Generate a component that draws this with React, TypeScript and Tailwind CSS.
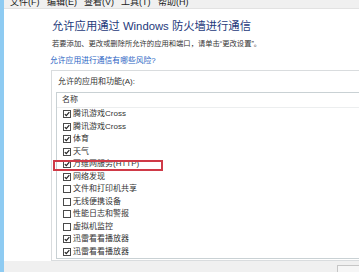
import React from "react";

const menus = ["文件(F)", "编辑(E)", "查看(V)", "工具(T)", "帮助(H)"];

const apps = [
  { name: "腾讯游戏Cross", checked: true },
  { name: "腾讯游戏Cross", checked: true },
  { name: "体育", checked: true },
  { name: "天气", checked: true },
  { name: "万维网服务(HTTP)", checked: true, marked: true },
  { name: "网络发现", checked: true },
  { name: "文件和打印机共享", checked: false },
  { name: "无线便携设备", checked: false },
  { name: "性能日志和警报", checked: false },
  { name: "虚拟机监控", checked: false },
  { name: "迅雷看看播放器", checked: true },
  { name: "迅雷看看播放器", checked: true },
];

const Box = ({ checked }: { checked: boolean }) => (
  <svg width="8" height="8" viewBox="0 0 8 8" className="shrink-0">
    <rect x="0.5" y="0.5" width="7" height="7" fill="#fff" stroke="#4a4a4a" />
    {checked && <path d="M1.8 4.1 L3.3 5.7 L6.3 2.2" fill="none" stroke="#222" strokeWidth="1.2" />}
  </svg>
);

const App = () => {
  return (
    <div
      className="w-[359px] h-[272px] overflow-hidden flex bg-white text-[#333]"
      style={{ fontFamily: '"Liberation Sans", "Noto Sans CJK SC", sans-serif' }}
    >
      <div className="w-[4px] shrink-0 bg-[#8ecbf2]" />
      <div className="flex-1 flex flex-col min-w-0">
        {/* menu bar, top half cut off by the crop */}
        <div className="h-[9px] shrink-0 bg-[#f0f0f0] border-b border-[#e2e2e2] overflow-hidden flex items-end pl-[6px] gap-[10px] text-[9px] leading-[11px] text-[#222]">
          {menus.map((m) => (
            <span key={m} className="w-[27px] whitespace-nowrap">{m}</span>
          ))}
        </div>

        <div className="flex-1 flex flex-col pl-[48px] min-h-0">
          <h1 className="mt-[10px] text-[11.3px] leading-[14px] text-[#1e3a7b] whitespace-nowrap font-normal">
            允许应用通过 Windows 防火墙进行通信
          </h1>
          <p className="mt-[6px] text-[7.3px] leading-[10px] whitespace-nowrap">
            若要添加、更改或删除所允许的应用和端口，请单击“更改设置”。
          </p>
          <a className="mt-[7px] -ml-[2px] text-[7.8px] leading-[10px] text-[#2a64c4] whitespace-nowrap">
            允许应用进行通信有哪些风险?
          </a>

          <div className="mt-[4px] -ml-[1px] flex-1 border-t border-l border-b border-[#d9dcde] flex flex-col pl-[4px] pb-[1px] min-h-0">
            <div className="pt-[6px] pl-[2px] text-[8px] leading-[10px] text-[#333]">允许的应用和功能(A):</div>
            <div className="mt-[5px] flex-1 border-t border-l border-b border-[#c9d1d4] flex flex-col">
              <div className="h-[15px] shrink-0 border-b border-[#eceeef] flex items-center pl-[5px] text-[8px] text-[#333]">
                名称
              </div>
              {apps.map((a, i) => (
                <div key={i} className="relative h-[12.5px] shrink-0 flex items-center gap-[2px] pl-[6px] text-[8px] leading-[10px] whitespace-nowrap">
                  <Box checked={a.checked} />
                  <span>{a.name}</span>
                  {a.marked && (
                    <div className="absolute left-[-4px] top-[2px] w-[110px] h-[11px] border-2 border-[#cf3a47]" />
                  )}
                </div>
              ))}
            </div>
          </div>
        </div>

        <div className="h-[11px] shrink-0 bg-[#f0f0f0] flex justify-end items-end">
          <div className="w-[22px] h-[7px] border-t border-l border-[#c6c6c6] bg-[#f6f6f6]" />
        </div>
      </div>
    </div>
  );
};

export default App;
